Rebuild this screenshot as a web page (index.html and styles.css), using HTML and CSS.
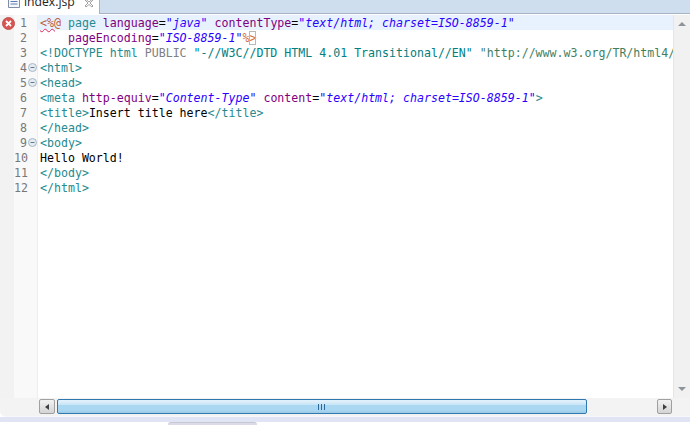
FILE: index.html
```html
<!DOCTYPE html>
<html lang="en">
<head>
<meta charset="utf-8">
<title>index.jsp</title>
<link rel="stylesheet" href="styles.css">
</head>
<body>
<div class="app">
  <div class="tabbar">
    <div class="tab">
      <svg class="file-icon" width="14" height="10" viewBox="0 0 14 10"><path d="M1.5 0V7.5H12.5V0" fill="#f4f6fa" stroke="#7f8ea5"/><path d="M3.5 1.5H10.5M3.5 4H10.5" stroke="#5d7fb5"/></svg>
      <span class="tab-name">index.jsp</span>
      <svg class="close" width="10" height="8" viewBox="0 2 10 8"><path d="M1.5 1 L5 4 L8.5 1 L9 2 L6 5 L9 8 L8 9 L5 6.5 L2 9 L1 8 L4 5 L1 2 Z" fill="#fff" stroke="#8a8a8a" stroke-width=".8"/></svg>
    </div>
  </div>
  <div class="editor">
    <div class="ruler">
      <svg class="err" width="13" height="13" viewBox="0 0 13 13"><circle cx="6.5" cy="6.5" r="6" fill="#d9534f" stroke="#c25555"/><path d="M4 4L9 9M9 4L4 9" stroke="#fff" stroke-width="1.8"/></svg>
    </div>
    <div class="numbers">
      <div class="num">1</div>
      <div class="num">2</div>
      <div class="num">3</div>
      <div class="num fold">4<svg class="minus" width="9" height="9" viewBox="0 0 9 9"><circle cx="4.5" cy="4.5" r="4" fill="#e4ecf2" stroke="#a9b8c6"/><path d="M2.5 4.5H6.5" stroke="#62788c"/></svg></div>
      <div class="num fold">5<svg class="minus" width="9" height="9" viewBox="0 0 9 9"><circle cx="4.5" cy="4.5" r="4" fill="#e4ecf2" stroke="#a9b8c6"/><path d="M2.5 4.5H6.5" stroke="#62788c"/></svg></div>
      <div class="num">6</div>
      <div class="num">7</div>
      <div class="num">8</div>
      <div class="num fold">9<svg class="minus" width="9" height="9" viewBox="0 0 9 9"><circle cx="4.5" cy="4.5" r="4" fill="#e4ecf2" stroke="#a9b8c6"/><path d="M2.5 4.5H6.5" stroke="#62788c"/></svg></div>
      <div class="num">10</div>
      <div class="num">11</div>
      <div class="num">12</div>
    </div>
    <div class="code">
<div class="line current"><span class="err-mark">&lt;%@</span> <span class="tag">page</span> <span class="attr">language</span>=<span class="val">"java"</span> <span class="attr">contentType</span>=<span class="val">"text/html; charset=ISO-8859-1"</span></div>
<div class="line">    <span class="attr">pageEncoding</span>=<span class="val">"ISO-8859-1"</span><span class="jsp">%<span class="boxed">&gt;</span></span></div>
<div class="line"><span class="tag">&lt;!DOCTYPE html</span> <span class="kw">PUBLIC</span> <span class="str">"-//W3C//DTD HTML 4.01 Transitional//EN"</span> <span class="uri">"http://www.w3.org/TR/html4/</span></div>
<div class="line"><span class="tag">&lt;html&gt;</span></div>
<div class="line"><span class="tag">&lt;head&gt;</span></div>
<div class="line"><span class="tag">&lt;meta</span> <span class="attr">http-equiv</span>=<span class="val">"Content-Type"</span> <span class="attr">content</span>=<span class="val">"text/html; charset=ISO-8859-1"</span><span class="tag">&gt;</span></div>
<div class="line"><span class="tag">&lt;title&gt;</span>Insert title here<span class="tag">&lt;/title&gt;</span></div>
<div class="line"><span class="tag">&lt;/head&gt;</span></div>
<div class="line"><span class="tag">&lt;body&gt;</span></div>
<div class="line">Hello World!</div>
<div class="line"><span class="tag">&lt;/body&gt;</span></div>
<div class="line"><span class="tag">&lt;/html&gt;</span></div>
    </div>
    <div class="vscroll">
      <span class="up"></span>
      <span class="down"></span>
    </div>
  </div>
  <div class="hscroll">
    <div class="h-btn first"><span class="arrow-left"></span></div>
    <div class="thumb"><span class="grip"></span></div>
    <div class="h-btn"><span class="arrow-right"></span></div>
  </div>
  <div class="footer"><div class="bottom-tab"></div></div>
</div>
</body>
</html>
```
FILE: styles.css
```css
* { box-sizing: border-box; }
html, body { margin: 0; padding: 0; }
body { width: 690px; height: 425px; overflow: hidden; background: #fff; }
.app { display: flex; flex-direction: column; width: 690px; height: 425px; background: #fff; overflow: hidden; }

.tabbar { height: 14px; flex: none; background: #cfdeee; border-bottom: 1px solid #a8b3c4; display: flex; align-items: flex-start; }
.tab { width: 100px; height: 14px; background: #fff; display: flex; align-items: flex-start; overflow: hidden; border-right: 1px solid #a8b3c4; padding-left: 7px; }
.file-icon { flex: none; margin-top: 0; }
.tab-name { font: 12.2px/16px "Open Sans", "Liberation Sans", sans-serif; color: #222; margin: -6px 0 0 3px; }
.close { flex: none; margin: 0 0 0 9px; }

.editor { flex: none; height: 384px; display: flex; background: #fff; padding-top: 1px; }
.ruler { width: 14px; flex: none; background: #f2f2f2; position: relative; }
.err { position: absolute; left: 2px; top: 2px; }
.numbers { width: 24px; flex: none; background: #f9f9f9; border-right: 1px solid #eeeeee; font: 11.6px/17px "DejaVu Sans Mono", monospace; color: #787878; height: 383px; }
.num { height: 15px; padding-right: 10px; text-align: right; position: relative; }
.minus { position: absolute; right: 0; top: 3px; }
.code { flex: 1; min-width: 0; overflow: hidden; font: 11.6px/17px "DejaVu Sans Mono", monospace; color: #000; padding-left: 2px; }
.line { height: 15px; white-space: pre; }
.current { background: #e8f2fe; margin-left: -2px; padding-left: 2px; }
.tag { color: #268a8f; }
.attr { color: #7f007f; }
.val { color: #2a00ff; font-style: italic; }
.kw { color: #808080; }
.str { color: #008080; }
.uri { color: #3f7f5f; }
.jsp { color: #d0703c; }
.err-mark { color: #bf5f3f; text-decoration: underline wavy #e0245e 1px; text-underline-offset: 1px; }
.boxed { outline: 1px solid #b8b8b8; outline-offset: -1px; }

.vscroll { width: 17px; flex: none; background: #f1f1f1; border-left: 1px solid #e6e6e6; display: flex; flex-direction: column; justify-content: space-between; align-items: center; padding: 7px 0 7px; }
.up { border: 4px solid transparent; border-top: 0; border-bottom: 4px solid #8d949a; }
.down { border: 4px solid transparent; border-bottom: 0; border-top: 4px solid #8d949a; }

.hscroll { flex: none; height: 19px; background: #f3f3f3; display: flex; align-items: flex-start; padding: 1px 18px 0 39px; border-radius: 0 0 0 6px; border-bottom: 1px solid #f7f7f9; }
.h-btn { width: 15px; height: 15px; flex: none; background: linear-gradient(#f2f2f2, #d4d4d4); border: 1px solid #a0a0a0; border-radius: 2px; display: flex; align-items: center; justify-content: center; }
.h-btn.first { width: 16px; }
.arrow-left { border: 3.5px solid transparent; border-left: 0; border-right: 4px solid #3c4046; }
.arrow-right { border: 3.5px solid transparent; border-right: 0; border-left: 4px solid #3c4046; }
.thumb { width: 530px; height: 15px; flex: none; margin: 0 auto 0 2px; border: 1px solid #2f78b0; border-radius: 2px; background: linear-gradient(#e4f3fc 0, #c8e5f6 5px, #aad7f1 5px, #aad7f1 10px, #9ccae6 13px); display: flex; align-items: center; justify-content: center; }
.grip { width: 8px; height: 6px; background: repeating-linear-gradient(90deg, #2c6a9c 0 1px, transparent 1px 3px); }

.footer { flex: 1; background: linear-gradient(#e0e4f5 5px, #fff 5px); padding: 5px 0 0 168px; border-radius: 0; }
.bottom-tab { width: 89px; height: 3px; background: #dcdce8; border-top: 1px solid #c8c8d4; border-radius: 5px 5px 0 0; }
```
